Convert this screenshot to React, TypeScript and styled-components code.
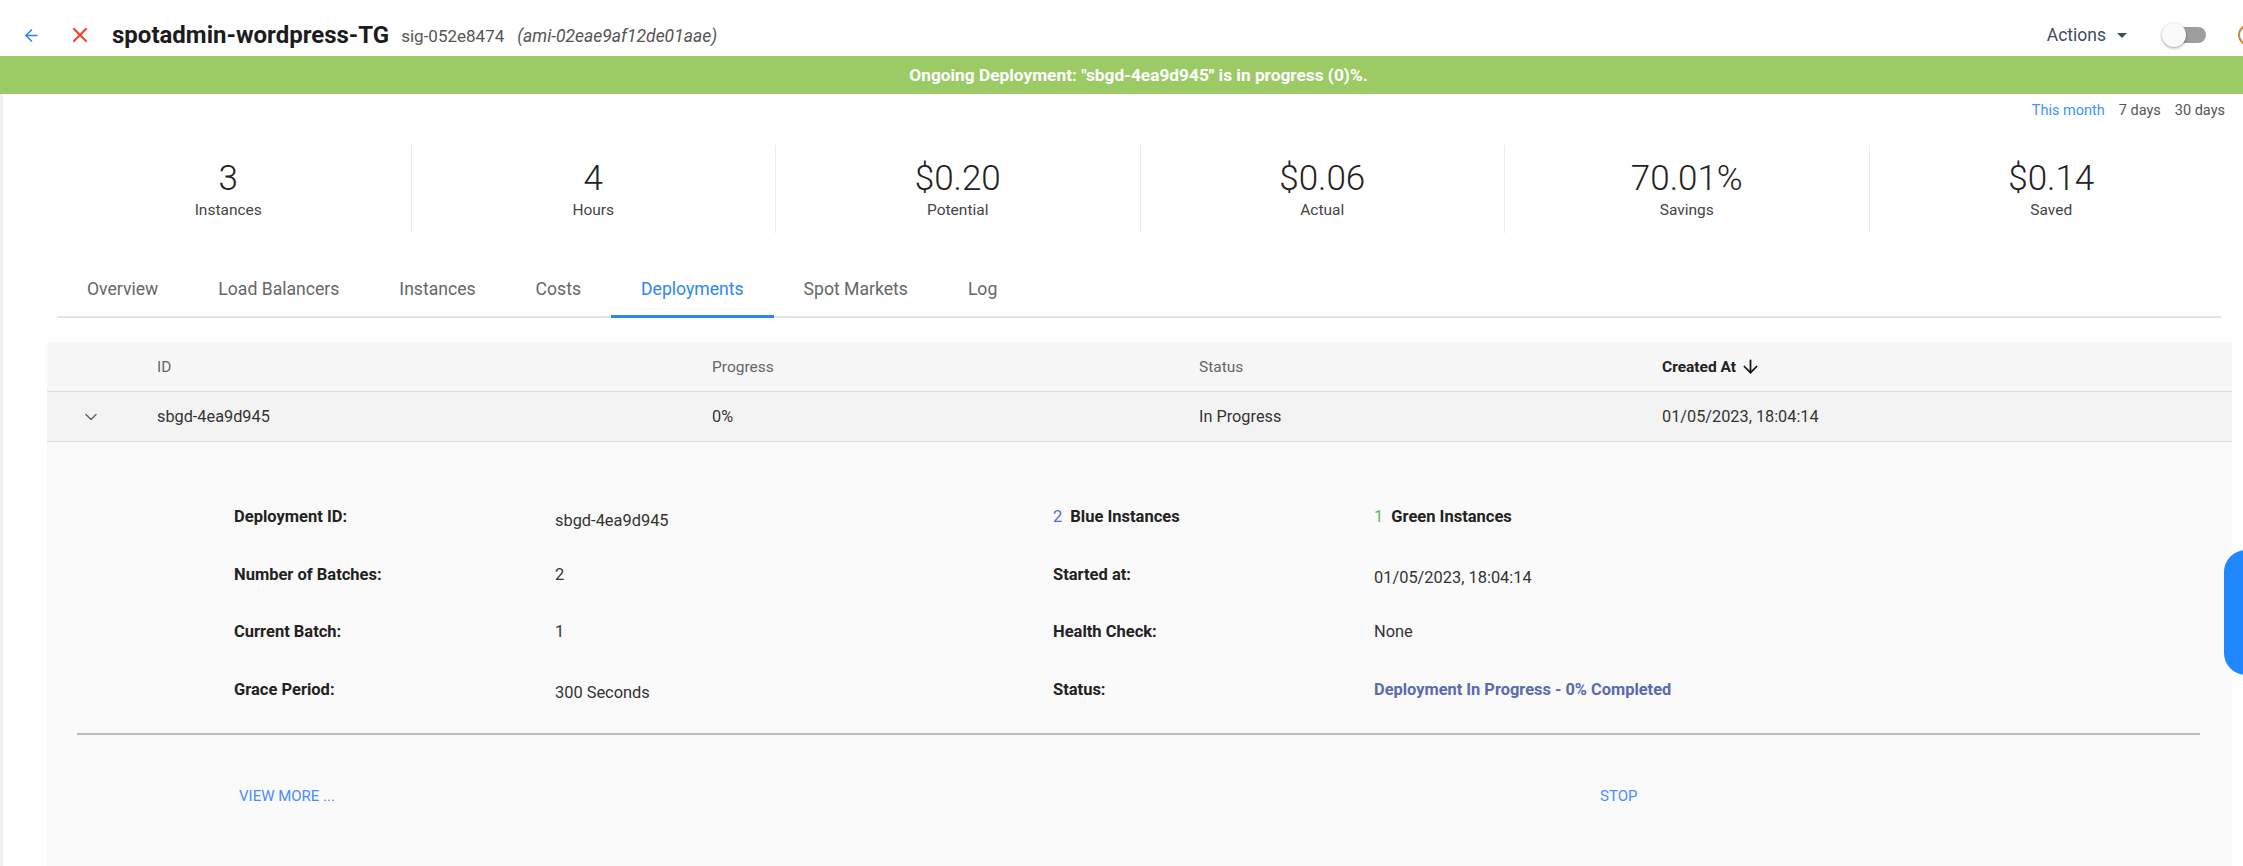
import React from "react";
import styled, { createGlobalStyle } from "styled-components";
import { ArrowLeft, X, ChevronDown, ArrowDown } from "lucide-react";

const Global = createGlobalStyle`
  html, body { margin: 0; padding: 0; background: #fff; overflow: hidden; }
  body { font-family: Roboto, "Liberation Sans", sans-serif; color: #333; }
  * { box-sizing: border-box; }
`;

const Page = styled.div`
  width: 2243px;
  height: 866px;
  display: flex;
  flex-direction: column;
  overflow: hidden;
`;

const TopBar = styled.header`
  height: 56px;
  display: flex;
  align-items: center;
  padding: 14px 0 0 22px;
  white-space: nowrap;
`;

const IconBtn = styled.span<{ $color: string; $ml?: number }>`
  display: inline-flex;
  align-items: center;
  color: ${(p) => p.$color};
  margin-left: ${(p) => p.$ml ?? 0}px;
`;

const Title = styled.h1`
  margin: 0 0 0 20px;
  font-size: 24px;
  font-weight: 700;
  color: #1c1c1c;
`;

const Sig = styled.span`
  margin-left: 12px;
  font-size: 17px;
  color: #555;
  padding-top: 2px;
`;

const Ami = styled.span`
  margin-left: 13px;
  font-size: 17.5px;
  font-style: italic;
  color: #555;
  padding-top: 2px;
`;

const Spacer = styled.div`
  flex: 1;
`;

const Actions = styled.span`
  display: inline-flex;
  align-items: center;
  font-size: 17.5px;
  color: #3d4b63;
  gap: 11px;
`;

const Caret = styled.span`
  width: 0;
  height: 0;
  border-left: 5px solid transparent;
  border-right: 5px solid transparent;
  border-top: 5px solid #3d4b63;
`;

const Toggle = styled.span`
  position: relative;
  margin-left: 37px;
  width: 42px;
  height: 16px;
  border-radius: 8px;
  background: #9e9e9e;
`;

const Knob = styled.span`
  position: absolute;
  left: -2px;
  top: -4px;
  width: 24px;
  height: 24px;
  border-radius: 50%;
  background: #fafafa;
  box-shadow: 0 1px 3px rgba(0, 0, 0, 0.4);
`;

const Avatar = styled.span`
  width: 22px;
  height: 22px;
  border-radius: 50%;
  border: 2px solid #c98a3c;
  flex-shrink: 0;
  margin-left: 32px;
  margin-right: -17px;
`;

const Banner = styled.div`
  height: 38px;
  background: #9ccb66;
  color: #fff;
  font-size: 17.3px;
  font-weight: 700;
  display: flex;
  align-items: center;
  justify-content: center;
  padding-left: 34px;
`;

const Body = styled.div`
  flex: 1;
  border-left: 3px solid #f1f1f1;
  display: flex;
  flex-direction: column;
`;

const RangeRow = styled.div`
  height: 32px;
  display: flex;
  justify-content: flex-end;
  align-items: center;
  gap: 14px;
  padding-right: 18px;
  font-size: 14.5px;
`;

const RangeItem = styled.span<{ $active?: boolean }>`
  color: ${(p) => (p.$active ? "#3a95ff" : "#555")};
`;

const Stats = styled.div`
  margin: 19px 10px 0 43px;
  height: 88px;
  display: grid;
  grid-template-columns: repeat(6, 1fr);
`;

const Stat = styled.div<{ $first?: boolean }>`
  display: flex;
  flex-direction: column;
  align-items: center;
  justify-content: center;
  border-left: ${(p) => (p.$first ? "none" : "1px solid #ececec")};
`;

const StatValue = styled.div`
  font-size: 35px;
  font-weight: 300;
  color: #222;
  line-height: 40px;
`;

const StatLabel = styled.div`
  font-size: 15.5px;
  color: #444;
  margin-top: 2px;
`;

const Tabs = styled.nav`
  margin: 29px 22px 0 54px;
  display: flex;
  border-bottom: 2px solid #e4e4e4;
`;

const Tab = styled.div<{ $active?: boolean }>`
  height: 56px;
  padding: 0 30px;
  display: flex;
  align-items: center;
  font-size: 17.6px;
  color: ${(p) => (p.$active ? "#2b87f3" : "#666")};
  border-bottom: 3px solid ${(p) => (p.$active ? "#2b87f3" : "transparent")};
  margin-bottom: -2px;
`;

const Table = styled.div`
  margin: 24px 11px 0 44px;
  flex: 1;
  display: flex;
  flex-direction: column;
  background: #fafafa;
`;

const Row = styled.div<{ $head?: boolean }>`
  height: 50px;
  display: grid;
  grid-template-columns: 110px 555px 487px 463px 1fr;
  align-items: center;
  background: ${(p) => (p.$head ? "#f7f7f7" : "#f3f3f3")};
  border-bottom: 1px solid #dcdcdc;
  font-size: ${(p) => (p.$head ? "15.5px" : "16.3px")};
  color: ${(p) => (p.$head ? "#666" : "#333")};
`;

const Cell = styled.div<{ $strong?: boolean }>`
  display: flex;
  align-items: center;
  gap: 4px;
  font-weight: ${(p) => (p.$strong ? 700 : 400)};
  color: ${(p) => (p.$strong ? "#222" : "inherit")};
`;

const ChevronCell = styled.div`
  display: flex;
  padding-left: 34px;
  color: #666;
`;

const Detail = styled.div`
  padding: 46px 0 0 187px;
  display: grid;
  grid-template-columns: 321px 498px 321px 1fr;
  grid-auto-rows: 57.5px;
  align-items: center;
`;

const Label = styled.div`
  font-size: 16.5px;
  font-weight: 700;
  color: #222;
`;

const Value = styled.div<{ $drop?: boolean; $status?: boolean }>`
  font-size: 16.4px;
  padding-top: ${(p) => (p.$drop ? "7px" : "0")};
  color: ${(p) => (p.$status ? "#5b69ad" : "#333")};
  font-weight: ${(p) => (p.$status ? 700 : 400)};
`;

const Count = styled.span<{ $color: string }>`
  color: ${(p) => p.$color};
  margin-right: 8px;
  font-weight: 400;
`;

const Divider = styled.hr`
  margin: 15px 32px 0 30px;
  border: none;
  height: 2px;
  background: #bdbdbd;
`;

const Footer = styled.div`
  display: grid;
  grid-template-columns: 1361px 1fr;
  padding: 52px 0 0 192px;
`;

const LinkBtn = styled.span`
  font-size: 15px;
  color: #4a8cff;
  text-transform: uppercase;
`;

const Widget = styled.div`
  position: fixed;
  left: 2224px;
  top: 550px;
  width: 44px;
  height: 125px;
  border-radius: 22px;
  background: #1f88ff;
`;

const stats = [
  ["3", "Instances"],
  ["4", "Hours"],
  ["$0.20", "Potential"],
  ["$0.06", "Actual"],
  ["70.01%", "Savings"],
  ["$0.14", "Saved"],
];

const tabs = ["Overview", "Load Balancers", "Instances", "Costs", "Deployments", "Spot Markets", "Log"];

export default function App() {
  return (
    <Page>
      <Global />
      <TopBar>
        <IconBtn $color="#2f80ff">
          <ArrowLeft size={19} strokeWidth={2} />
        </IconBtn>
        <IconBtn $color="#f44336" $ml={27}>
          <X size={24} strokeWidth={2.2} />
        </IconBtn>
        <Title>spotadmin-wordpress-TG</Title>
        <Sig>sig-052e8474</Sig>
        <Ami>(ami-02eae9af12de01aae)</Ami>
        <Spacer />
        <Actions>
          Actions
          <Caret />
        </Actions>
        <Toggle>
          <Knob />
        </Toggle>
        <Avatar />
      </TopBar>
      <Banner>Ongoing Deployment: "sbgd-4ea9d945" is in progress (0)%.</Banner>
      <Body>
        <RangeRow>
          <RangeItem $active>This month</RangeItem>
          <RangeItem>7 days</RangeItem>
          <RangeItem>30 days</RangeItem>
        </RangeRow>
        <Stats>
          {stats.map(([v, l], i) => (
            <Stat key={l} $first={i === 0}>
              <StatValue>{v}</StatValue>
              <StatLabel>{l}</StatLabel>
            </Stat>
          ))}
        </Stats>
        <Tabs>
          {tabs.map((t) => (
            <Tab key={t} $active={t === "Deployments"}>
              {t}
            </Tab>
          ))}
        </Tabs>
        <Table>
          <Row $head>
            <div />
            <Cell>ID</Cell>
            <Cell>Progress</Cell>
            <Cell>Status</Cell>
            <Cell $strong>
              Created At
              <ArrowDown size={21} strokeWidth={2} color="#111" />
            </Cell>
          </Row>
          <Row>
            <ChevronCell>
              <ChevronDown size={20} strokeWidth={1.8} />
            </ChevronCell>
            <Cell>sbgd-4ea9d945</Cell>
            <Cell>0%</Cell>
            <Cell>In Progress</Cell>
            <Cell>01/05/2023, 18:04:14</Cell>
          </Row>
          <Detail>
            <Label>Deployment ID:</Label>
            <Value $drop>sbgd-4ea9d945</Value>
            <Label>
              <Count $color="#5c6bc0">2</Count>Blue Instances
            </Label>
            <Label>
              <Count $color="#5cb85c">1</Count>Green Instances
            </Label>

            <Label>Number of Batches:</Label>
            <Value>2</Value>
            <Label>Started at:</Label>
            <Value $drop>01/05/2023, 18:04:14</Value>

            <Label>Current Batch:</Label>
            <Value>1</Value>
            <Label>Health Check:</Label>
            <Value>None</Value>

            <Label>Grace Period:</Label>
            <Value $drop>300 Seconds</Value>
            <Label>Status:</Label>
            <Value $status>Deployment In Progress - 0% Completed</Value>
          </Detail>
          <Divider />
          <Footer>
            <LinkBtn>View more ...</LinkBtn>
            <LinkBtn>Stop</LinkBtn>
          </Footer>
        </Table>
      </Body>
      <Widget />
    </Page>
  );
}
